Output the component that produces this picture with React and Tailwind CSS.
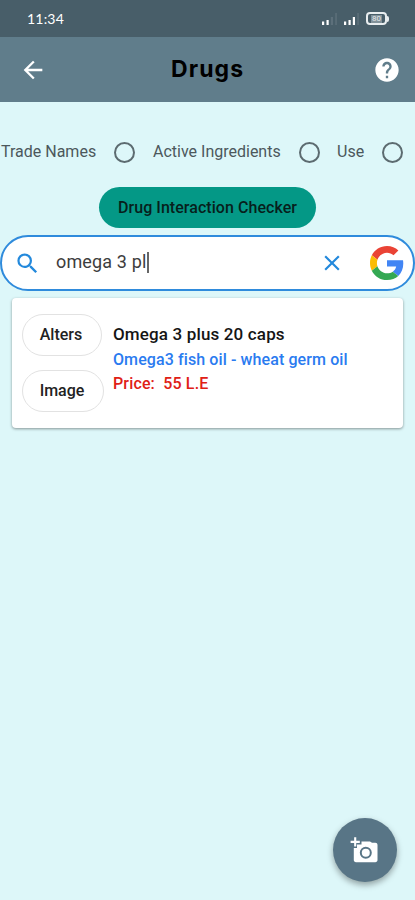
import { MdArrowBack, MdHelp, MdSearch, MdClose } from 'react-icons/md'

function SignalBars({ strong }) {
  return (
    <svg className="w-[16px] h-[12px]" viewBox="0 0 16 12">
      <rect x="0" y="8.5" width="2.2" height="3.5" fill="#fff" />
      <rect x="4.5" y="7" width="2.2" height="5" fill="#fff" />
      <rect x="8.8" y="4" width="2.2" height="8" fill={strong ? '#fff' : '#5d707b'} />
      <rect x="13.3" y="0" width="1.5" height="12" fill="#5d707b" />
    </svg>
  )
}

function Battery() {
  return (
    <div className="flex items-center">
      <div className="flex h-[13px] w-[21px] items-center justify-center rounded-[4px] border-2 border-[#e8edef] bg-[#485e69] text-[8px] leading-none">
        <span className="bg-[#82929a] px-px text-[#e4e9eb]">80</span>
      </div>
      <div className="h-[6px] w-[2px] rounded-r-full bg-[#e8edef]" />
    </div>
  )
}

function GoogleLogo() {
  return (
    <svg className="h-[34px] w-[34px]" viewBox="0 0 48 48">
      <path fill="#ea4335" d="M24 9.5c3.54 0 6.71 1.22 9.21 3.6l6.85-6.85C35.9 2.38 30.47 0 24 0 14.62 0 6.51 5.38 2.56 13.22l7.98 6.19C12.43 13.72 17.74 9.5 24 9.5z" />
      <path fill="#4285f4" d="M46.98 24.55c0-1.57-.15-3.09-.38-4.55H24v9.02h12.94c-.58 2.96-2.26 5.48-4.78 7.18l7.73 6c4.51-4.18 7.09-10.36 7.09-17.65z" />
      <path fill="#fbbc05" d="M10.53 28.59c-.48-1.45-.76-2.99-.76-4.59s.27-3.14.76-4.59l-7.98-6.19C.92 16.46 0 20.12 0 24s.92 7.54 2.56 10.78l7.97-6.19z" />
      <path fill="#34a853" d="M24 48c6.48 0 11.93-2.13 15.89-5.81l-7.73-6c-2.15 1.45-4.92 2.3-8.16 2.3-6.26 0-11.57-4.22-13.47-9.91l-7.98 6.19C6.51 42.62 14.62 48 24 48z" />
    </svg>
  )
}

// camera body with a ring cut out of it and a plus on the top-left corner
function AddPhoto() {
  return (
    <svg className="mr-[2px] h-[26px] w-[28px]" viewBox="0 0 28 26">
      <path
        fill="#fff"
        fillRule="evenodd"
        d="M11.5 4.5H20l2 1.300h3.300c1.300 0 2.200.9 2.200 2.200v15.100c0 1.300-.9 2.200-2.200 2.200H6c-1.300 0-2.200-.9-2.200-2.200V11h3.200V7.500h4.500zM15.8 9.800a6 6 0 1 0 0 12a6 6 0 1 0 0-12z"
      />
      <circle cx="15.8" cy="15.8" r="4" fill="#fff" />
      <path d="M5.2.3v9.200M.6 4.900h9.200" stroke="#fff" strokeWidth="2.1" />
    </svg>
  )
}

function Radio() {
  return <span className="h-[21px] w-[21px] shrink-0 rounded-full border-2 border-[#5c6b70]" />
}

export default function App() {
  return (
    <div className="flex h-[900px] w-[415px] flex-col overflow-hidden bg-[#ddf7f9] font-['Roboto',sans-serif]">
      <div className="flex h-[37px] shrink-0 items-center bg-[#485e69] pr-[26px] pl-[27px] text-white">
        <span className="font-['Lato',sans-serif] text-[14px] tracking-[0.2px]">11:34</span>
        <div className="ml-auto flex items-center gap-[6px]">
          <SignalBars />
          <SignalBars strong />
          <Battery />
        </div>
      </div>

      <header className="flex h-[65px] shrink-0 items-center bg-[#607d8b] pr-[14px] pl-[19px] text-white">
        <MdArrowBack className="h-[28px] w-[28px]" />
        <h1 className="ml-[124px] font-['Inter',sans-serif] text-[23px] font-bold tracking-[1.1px] text-black">Drugs</h1>
        <MdHelp className="ml-auto h-[28px] w-[28px]" />
      </header>

      <div className="mt-[39px] flex h-[22px] shrink-0 items-center text-[16px] whitespace-nowrap text-[#4c585c]">
        <span className="w-[114px] pl-px">Trade Names</span>
        <Radio />
        <span className="w-[164px] pl-[18px]">Active Ingredients</span>
        <Radio />
        <span className="w-[62px] pl-[17px]">Use</span>
        <Radio />
      </div>

      <button className="mt-[24px] h-[41px] w-[217px] shrink-0 self-center rounded-full bg-[#049886] text-[16px] font-medium tracking-[0.05px] text-[#071f1c]">
        Drug Interaction Checker
      </button>

      <div className="mt-[7px] flex h-[56px] shrink-0 items-center rounded-full border-2 border-[#2f8bdc] bg-white pr-[9px] pl-[12px]">
        <MdSearch className="h-[27px] w-[27px] text-[#2389dc]" />
        <span className="ml-[15px] pb-[3px] text-[18px] tracking-[0.15px] text-[#3d3d3d]">omega 3 pl</span>
        <span className="mb-[2px] h-[21px] w-[2px] bg-[#666]" />
        <MdClose className="mr-[25px] ml-auto h-[26px] w-[26px] text-[#2389dc]" />
        <GoogleLogo />
      </div>

      <div className="mx-[12px] mt-[7px] flex h-[130px] shrink-0 rounded-[4px] bg-white pt-[16px] pl-[10px] shadow-[0_1px_3px_rgba(0,0,0,0.4)]">
        <div className="flex w-[91px] flex-col items-start gap-[14px] text-[16px] font-medium text-[#222]">
          <button className="h-[42px] w-[80px] rounded-full border border-[#e2e2e2] pr-[2px]">Alters</button>
          <button className="h-[42px] w-[82px] rounded-full border border-[#e2e2e2] pr-[2px]">Image</button>
        </div>
        <div className="pt-[8px] text-[16px] leading-[25px] font-medium whitespace-pre">
          <p className="text-[17px] tracking-[0.15px] text-[#151515]">Omega 3 plus 20 caps</p>
          <p className="tracking-[0.1px] text-[#2a7bf0]">Omega3 fish oil - wheat germ oil</p>
          <p className="leading-[24px] tracking-[0.15px] text-[#e02015]">Price:  55 L.E</p>
        </div>
      </div>

      <button className="mt-auto mr-[18px] mb-[18px] flex h-[64px] w-[64px] shrink-0 items-center justify-center self-end rounded-full bg-[#587586] shadow-[0_3px_6px_rgba(0,0,0,0.35)]">
        <AddPhoto />
      </button>
    </div>
  )
}
